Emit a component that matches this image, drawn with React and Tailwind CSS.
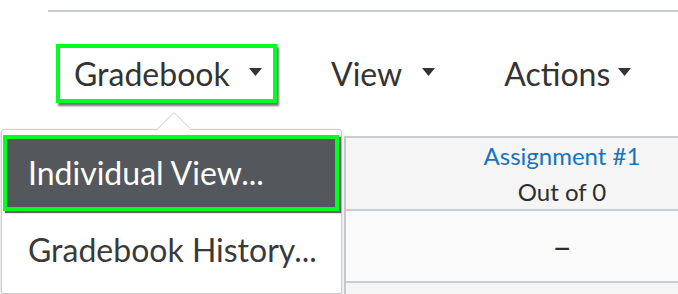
import React from "react";

const Caret = ({ className }) => (
  <svg className={className} width="13" height="8" viewBox="0 0 13 8">
    <polygon points="0,0 13,0 6.5,8" fill="currentColor" />
  </svg>
);

export default function App() {
  return (
    <div className="relative w-[678px] h-[294px] overflow-hidden bg-white font-['Lato',sans-serif] text-[#333]">
      {/* top divider */}
      <div className="ml-[48px] mt-[10px] h-[2px] bg-[#c7cdd1]" />

      {/* toolbar */}
      <div className="mt-[32px] flex items-center text-[32px] leading-none">
        <div className="ml-[56px] w-[221px] h-[59px] border-4 border-[#00ff22] shadow-[2px_3px_2px_rgba(0,0,0,0.55)] flex items-center pl-[14px]">
          <span>Gradebook</span>
          <Caret className="ml-[19px] -mt-[4px] text-[#333]" />
        </div>
        <div className="ml-[54px] flex items-center">
          <span>View</span>
          <Caret className="ml-[20px] -mt-[4px] text-[#333]" />
        </div>
        <div className="ml-[69px] flex items-center">
          <span>Actions</span>
          <Caret className="ml-[8px] -mt-[4px] text-[#333]" />
        </div>
      </div>

      {/* gradebook grid */}
      <div className="mt-[33px] ml-[344px] w-[434px] border-l-2 border-[#c7cdd1]">
        <div className="border-t-2 border-b-2 border-[#c7cdd1] bg-[#f5f5f5] h-[75px] flex flex-col items-center text-[24px] leading-[36px]">
          <a className="text-[#1474c0]">Assignment #1</a>
          <span className="text-[#2d2d2d]">Out of 0</span>
        </div>
        <div className="h-[70px] bg-[#fafafa] flex items-center justify-center text-[34px] leading-none text-[#2d2d2d]">
          –
        </div>
        <div className="border-t-2 border-[#c7cdd1] bg-[#f5f5f5] h-[20px]" />
      </div>

      {/* dropdown menu */}
      <div className="absolute left-[1px] top-[129px] w-[341px] h-[165px] bg-white border border-[#c7cdd1] rounded-[3px] shadow-[0_2px_4px_rgba(0,0,0,0.2)] px-[1px] pt-[5px]">
        <svg className="absolute left-[154px] -top-[18px]" width="36" height="19" viewBox="0 0 36 19">
          <polygon points="0,18.5 18,0.5 36,18.5" fill="#fff" stroke="#c7cdd1" strokeWidth="1" />
          <rect x="0" y="18" width="36" height="2" fill="#fff" />
        </svg>
        <div className="relative w-[336px] h-[76px] border-4 border-[#00ff22] bg-[#54585c] shadow-[2px_2px_1px_rgba(0,0,0,0.6)] flex items-center pl-[21px] text-white text-[32px] leading-none">
          Individual View...
        </div>
        <div className="h-[78px] flex items-center pl-[25px] text-[32px] leading-none text-[#3a3a3a]">
          Gradebook History...
        </div>
      </div>
    </div>
  );
}
